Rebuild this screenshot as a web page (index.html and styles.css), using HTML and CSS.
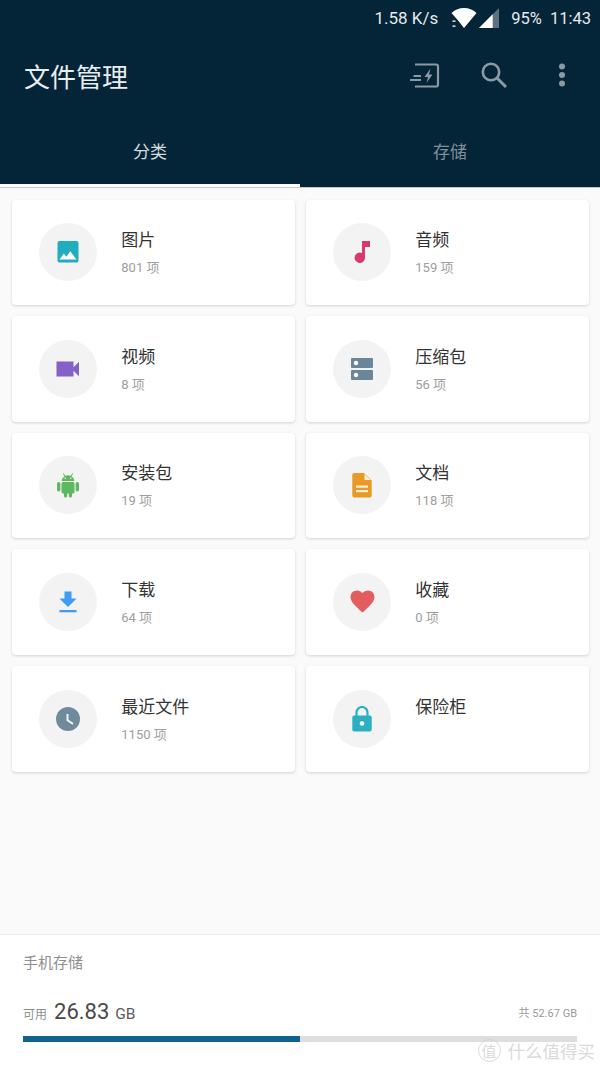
FILE: index.html
```html
<!DOCTYPE html>
<html lang="zh-CN">

<head>
    <meta charset="UTF-8">
    <meta name="viewport" content="width=device-width, initial-scale=1.0">
    <title>文件管理</title>
    <link rel="stylesheet" href="styles.css">
</head>

<body>
    <header class="app-header">
        <div class="status-bar">
            <span class="speed">1.58 K/s</span>
            <svg class="wifi" width="26" height="20" viewBox="0 0 26 20">
                <path d="M.5 5C4 1.700 8.500 0 13 0s9 1.700 12.500 5L13 20l-5.500-7z" fill="#fff" />
                <rect x="1.500" y="12.500" width="3" height="1.300" fill="#fff" />
                <rect x="1.500" y="17.500" width="3" height="1.300" fill="#fff" />
            </svg>
            <svg class="signal" width="20" height="20" viewBox="0 0 20 20">
                <path d="M0 20 20 0v20z" fill="#5d707e" />
                <path d="M0 20 13.700 6.300V20z" fill="#fff" />
            </svg>
            <span class="battery">95%</span>
            <span class="clock">11:43</span>
        </div>
        <div class="toolbar">
            <h1>文件管理</h1>
            <div class="actions">
                <svg class="action-clean" width="30" height="26" viewBox="0 0 30 26" fill="none" stroke="#8b9aa5" stroke-width="2.200">
                    <path d="M5 2.500h21a2 2 0 0 1 2 2v18a2 2 0 0 1-2 2H5" />
                    <path d="M3.500 14H11M0 18h11" stroke-width="2" />
                    <path d="M20.500 6.500l-6 8.500h3.500l-1.500 6 6-8.500H19z" fill="#8b9aa5" stroke="none" />
                </svg>
                <svg class="action-search" width="28" height="28" viewBox="0 0 28 28" fill="none" stroke="#8b9aa5" stroke-width="2.600">
                    <circle cx="11" cy="11" r="8.200" />
                    <path d="M17 17l9 9" stroke-width="3" />
                </svg>
                <svg class="action-more" width="8" height="24" viewBox="0 0 8 24" fill="#8b9aa5">
                    <circle cx="4" cy="3.500" r="3" />
                    <circle cx="4" cy="12" r="3" />
                    <circle cx="4" cy="20.500" r="3" />
                </svg>
            </div>
        </div>
        <nav class="tabs">
            <div class="tab active">分类</div>
            <div class="tab">存储</div>
        </nav>
    </header>

    <main class="category-grid">
        <div class="card">
            <div class="icon-circle">
                <svg width="24" height="24" viewBox="0 0 24 24">
                    <rect x="1.500" y="1" width="21" height="21.500" rx="2" fill="#1fadbf" />
                    <path d="M3.500 19.500l4.300-6 2.700 3.300 3.700-5.600 6.300 8.300z" fill="#fff" />
                </svg>
            </div>
            <div class="card-text">
                <div class="card-title">图片</div>
                <div class="card-count">801 项</div>
            </div>
        </div>
        <div class="card">
            <div class="icon-circle">
                <svg width="24" height="24" viewBox="0 0 24 24">
                    <path d="M12 1h8v6h-5v10.800a5.200 5.200 0 1 1-3-4.700z" fill="#d73a6c" />
                </svg>
            </div>
            <div class="card-text">
                <div class="card-title">音频</div>
                <div class="card-count">159 项</div>
            </div>
        </div>
        <div class="card">
            <div class="icon-circle">
                <svg width="24" height="24" viewBox="0 0 24 24">
                    <path d="M.5 4.500h17v5.700L23 4.700v14.600l-5.500-5.500v5.700H.5z" fill="#8560c6" />
                </svg>
            </div>
            <div class="card-text">
                <div class="card-title">视频</div>
                <div class="card-count">8 项</div>
            </div>
        </div>
        <div class="card">
            <div class="icon-circle">
                <svg width="24" height="24" viewBox="0 0 24 24">
                    <rect x="1" y="1" width="22" height="10" rx="1" fill="#6c8699" />
                    <rect x="1" y="13" width="22" height="10" rx="1" fill="#6c8699" />
                    <circle cx="6" cy="6" r="2.200" fill="#fff" />
                    <circle cx="6" cy="18" r="2.200" fill="#fff" />
                </svg>
            </div>
            <div class="card-text">
                <div class="card-title">压缩包</div>
                <div class="card-count">56 项</div>
            </div>
        </div>
        <div class="card">
            <div class="icon-circle">
                <svg width="24" height="26" viewBox="0 0 24 26">
                    <path d="M7.500 1.200l1.900 2.600a7 7 0 0 1 5.200 0l1.900-2.600.7.500-1.800 2.600A6.500 6.500 0 0 1 18.500 9h-13a6.500 6.500 0 0 1 3.100-4.700L6.800 1.700z" fill="#5fb760" />
                    <rect x="5.500" y="10" width="13" height="11.500" rx="1.500" fill="#5fb760" />
                    <rect x="1" y="10" width="3.400" height="9.500" rx="1.700" fill="#5fb760" />
                    <rect x="19.600" y="10" width="3.400" height="9.500" rx="1.700" fill="#5fb760" />
                    <rect x="8" y="19" width="3.200" height="6.500" rx="1.600" fill="#5fb760" />
                    <rect x="12.800" y="19" width="3.200" height="6.500" rx="1.600" fill="#5fb760" />
                    <circle cx="9.200" cy="6.300" r="0.800" fill="#f3f3f3" />
                    <circle cx="14.800" cy="6.300" r="0.800" fill="#f3f3f3" />
                </svg>
            </div>
            <div class="card-text">
                <div class="card-title">安装包</div>
                <div class="card-count">19 项</div>
            </div>
        </div>
        <div class="card">
            <div class="icon-circle">
                <svg width="24" height="26" viewBox="0 0 24 26">
                    <path d="M4.300 1h9.700l7.700 7.500v15a2 2 0 0 1-2 2H4.300a2 2 0 0 1-2-2v-20.500a2 2 0 0 1 2-2z" fill="#e99a25" />
                    <path d="M14.500 2v6h6.200z" fill="#fbeed8" />
                    <rect x="6" y="13.500" width="12" height="2.200" fill="#fbeed8" />
                    <rect x="6" y="18" width="12" height="2.200" fill="#fbeed8" />
                </svg>
            </div>
            <div class="card-text">
                <div class="card-title">文档</div>
                <div class="card-count">118 项</div>
            </div>
        </div>
        <div class="card">
            <div class="icon-circle">
                <svg width="24" height="24" viewBox="0 0 24 24">
                    <path d="M8.500 1.500h7v7h5L12 17 3.500 8.500h5z" fill="#3f9cf3" />
                    <rect x="3.500" y="20" width="17" height="2.300" fill="#3f9cf3" />
                </svg>
            </div>
            <div class="card-text">
                <div class="card-title">下载</div>
                <div class="card-count">64 项</div>
            </div>
        </div>
        <div class="card">
            <div class="icon-circle">
                <svg width="25" height="23" viewBox="0 0 26 24">
                    <path d="M13 23.500l-1.800-1.700C4.800 16 .500 12.100.500 7.300.500 3.400 3.500.500 7.300.500c2.200 0 4.300 1 5.700 2.600C14.400 1.500 16.500.500 18.700.500c3.800 0 6.800 2.900 6.800 6.800 0 4.800-4.300 8.700-10.700 14.500z" fill="#e35d60" />
                </svg>
            </div>
            <div class="card-text">
                <div class="card-title">收藏</div>
                <div class="card-count">0 项</div>
            </div>
        </div>
        <div class="card">
            <div class="icon-circle">
                <svg width="24" height="24" viewBox="0 0 24 24">
                    <circle cx="12" cy="12" r="12" fill="#6f8a9d" />
                    <path d="M11.500 7v6.300l5.500 3.500" fill="none" stroke="#f3f3f3" stroke-width="2" />
                </svg>
            </div>
            <div class="card-text">
                <div class="card-title">最近文件</div>
                <div class="card-count">1150 项</div>
            </div>
        </div>
        <div class="card">
            <div class="icon-circle">
                <svg width="24" height="26" viewBox="0 0 24 26">
                    <path d="M6.500 11V6.500a5.500 5.500 0 0 1 11 0V11" fill="none" stroke="#2bafc1" stroke-width="2.200" />
                    <rect x="2.300" y="9.500" width="19.400" height="16" rx="2" fill="#2bafc1" />
                    <circle cx="12" cy="17.500" r="2.300" fill="#fff" />
                </svg>
            </div>
            <div class="card-text">
                <div class="card-title">保险柜</div>
            </div>
        </div>
    </main>

    <footer class="storage">
        <div class="storage-title">手机存储</div>
        <div class="storage-info">
            <div class="free">
                <span class="free-label">可用</span>
                <span class="free-value">26.83</span>
                <span class="free-unit">GB</span>
            </div>
            <div class="total">共 52.67 GB</div>
        </div>
        <div class="storage-bar">
            <div class="storage-fill" style="width: 50%"></div>
        </div>
    </footer>

    <div class="watermark">
        <span class="watermark-logo">值</span>
        <span>什么值得买</span>
    </div>
</body>

</html>
```

FILE: styles.css
```css
* {
    box-sizing: border-box;
}

html,
body {
    margin: 0;
    height: 1067px;
}

body {
    position: relative;
    display: flex;
    flex-direction: column;
    overflow: hidden;
    font-family: Roboto, "Noto Sans CJK SC", sans-serif;
    background-color: #fafafa;
}

.app-header {
    height: 188px;
    background-color: #042437;
    color: #fff;
}

.status-bar {
    display: flex;
    justify-content: flex-end;
    align-items: center;
    height: 36px;
    padding-right: 9px;
    font-size: 16.500px;
    color: #e6eaed;
}

.speed {
    font-size: 17px;
}

.wifi {
    margin-left: 13px;
}

.signal {
    margin-left: 2px;
}

.battery {
    margin-left: 12px;
}

.clock {
    margin-left: 8px;
}

.toolbar {
    display: flex;
    justify-content: space-between;
    align-items: center;
    height: 78px;
    padding-left: 24px;
}

.toolbar h1 {
    margin: 0;
    font-size: 26px;
    font-weight: 400;
    color: #e9edef;
}

.actions {
    display: flex;
    align-items: center;
    padding-right: 34px;
}

.action-search {
    margin-left: 40px;
}

.action-more {
    margin-left: 50px;
}

.tabs {
    display: flex;
    height: 74px;
    border-bottom: 1px solid #c4cbcf;
}

.tab {
    flex: 1;
    padding-top: 24px;
    text-align: center;
    font-size: 17px;
    color: #808f9b;
}

.tab.active {
    height: 73px;
    border-bottom: 3px solid #fff;
    color: #d5dadd;
}

.category-grid {
    flex: 1;
    display: grid;
    grid-template-columns: 283px 283px;
    grid-auto-rows: 105.670px;
    align-content: start;
    gap: 11px;
    padding: 11.500px 11px 0 11.600px;
}

.card {
    display: flex;
    align-items: flex-start;
    padding: 23.500px 0 0 27.700px;
    background-color: #fff;
    border-radius: 4px;
    box-shadow: 0 1px 3px rgba(0, 0, 0, 0.16);
}

.icon-circle {
    display: flex;
    justify-content: center;
    align-items: center;
    width: 58px;
    height: 58px;
    border-radius: 50%;
    background-color: #f3f3f3;
}

.card-text {
    margin-left: 24px;
}

.card-title {
    margin-top: 3px;
    font-size: 17px;
    line-height: 28px;
    color: #333;
}

.card-count {
    margin-top: 4px;
    font-size: 13px;
    line-height: 20px;
    color: #9e9e9e;
}

.storage {
    height: 133px;
    padding: 0 23px;
    background-color: #fff;
    border-top: 1px solid #ececec;
}

.storage-title {
    padding-top: 17px;
    font-size: 15px;
    line-height: 22px;
    color: #8e8e8e;
}

.storage-info {
    display: flex;
    justify-content: space-between;
    align-items: flex-end;
    margin-top: 17px;
    height: 33px;
}

.free {
    display: flex;
    align-items: baseline;
}

.free-label {
    font-size: 12px;
    color: #8e8e8e;
}

.free-value {
    margin-left: 7px;
    font-size: 22px;
    color: #4a4a4a;
}

.free-unit {
    margin-left: 6px;
    font-size: 15.500px;
    color: #5c5c5c;
}

.total {
    padding-bottom: 4px;
    font-size: 11px;
    color: #9a9a9a;
}

.storage-bar {
    margin-top: 12px;
    height: 6px;
    background-color: #dedede;
}

.storage-fill {
    height: 100%;
    background-color: #10638f;
}

.watermark {
    position: absolute;
    right: 5px;
    bottom: 4px;
    display: flex;
    align-items: center;
    gap: 7px;
    font-size: 17.500px;
    color: rgba(205, 205, 205, 0.75);
}

.watermark-logo {
    display: flex;
    justify-content: center;
    align-items: center;
    width: 23px;
    height: 23px;
    border: 1px solid rgba(205, 205, 205, 0.75);
    border-radius: 50%;
    font-size: 15px;
}
```
